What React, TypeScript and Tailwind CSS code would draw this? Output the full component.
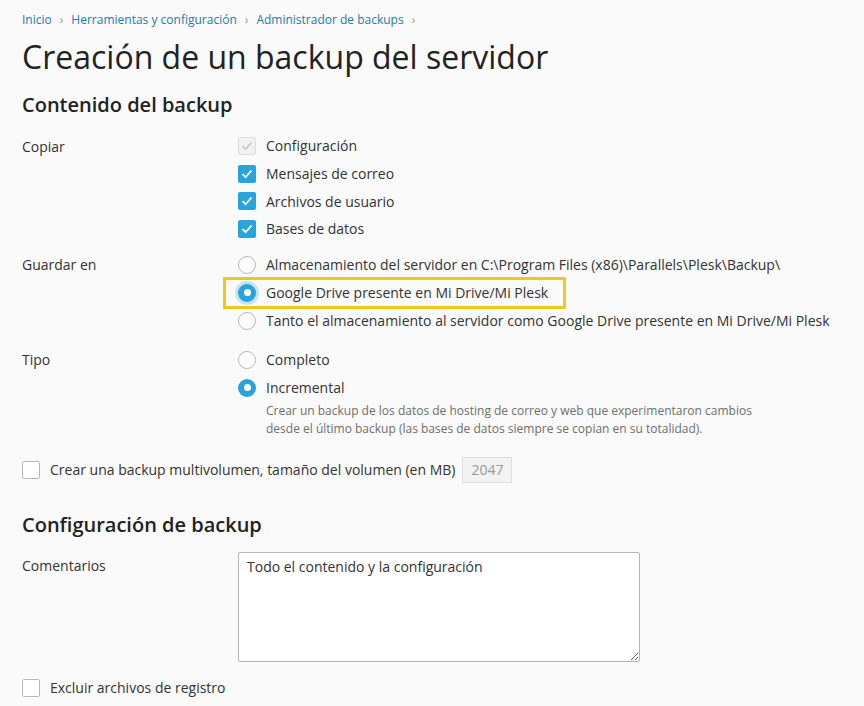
import React from "react";

const Check = ({ disabled }: { disabled?: boolean }) =>
  disabled ? (
    <span className="w-[18px] h-[18px] rounded-[2px] border border-[#dcdcdc] bg-[#f1f1f1] flex items-center justify-center shrink-0">
      <svg width="12" height="10" viewBox="0 0 12 10"><path d="M1.5 5.2 L4.6 8.2 L10.5 1.5" fill="none" stroke="#c4c4c4" strokeWidth="1.6" /></svg>
    </span>
  ) : (
    <span className="w-[18px] h-[18px] rounded-[2px] bg-[#28a3dc] flex items-center justify-center shrink-0">
      <svg width="12" height="10" viewBox="0 0 12 10"><path d="M1.5 5.2 L4.6 8.2 L10.5 1.5" fill="none" stroke="#ffffff" strokeWidth="1.8" /></svg>
    </span>
  );

const EmptyBox = () => (
  <span className="w-[18px] h-[18px] rounded-[2px] border border-[#b8b8b8] bg-white shrink-0" />
);

const Radio = ({ on, glow }: { on?: boolean; glow?: boolean }) =>
  on ? (
    <span className={"w-[18px] h-[18px] rounded-full bg-[#28a3dc] flex items-center justify-center shrink-0 " + (glow ? "shadow-[0_0_0_3px_rgba(40,163,220,0.25)]" : "")}>
      <span className="w-[7px] h-[7px] rounded-full bg-white" />
    </span>
  ) : (
    <span className="w-[18px] h-[18px] rounded-full border border-[#b8b8b8] bg-white shrink-0" />
  );

const Opt = ({ icon, text, tight }: { icon: React.ReactNode; text: string; tight?: boolean }) => (
  <div className={(tight ? "h-[27.7px]" : "h-[28px]") + " flex items-center gap-[10px]"}>
    {icon}
    <span className="text-[14px] text-[#333]">{text}</span>
  </div>
);

export default function App() {
  return (
    <div className="min-h-[706px] bg-[#fafafa] px-[22px] text-[#333]" style={{ fontFamily: '"Open Sans", sans-serif' }}>
      <div className="pt-[11px] flex items-center text-[12px] leading-[18px]">
        <span className="text-[#1e7bb0]">Inicio</span>
        <span className="text-[#999] mx-[8px]">›</span>
        <span className="text-[#1e7bb0]">Herramientas y configuración</span>
        <span className="text-[#999] mx-[8px]">›</span>
        <span className="text-[#1e7bb0]">Administrador de backups</span>
        <span className="text-[#999] mx-[8px]">›</span>
      </div>
      <h1 className="text-[32px] leading-[44px] text-[#222] mt-[6px]">Creación de un backup del servidor</h1>
      <h2 className="text-[20px] leading-[28px] font-semibold text-[#222] mt-[12px]">Contenido del backup</h2>

      <div className="grid grid-cols-[216px_1fr] mt-[13px]">
        <div className="text-[14px] h-[28px] flex items-center">Copiar</div>
        <div>
          <Opt tight icon={<Check disabled />} text="Configuración" />
          <Opt tight icon={<Check />} text="Mensajes de correo" />
          <Opt tight icon={<Check />} text="Archivos de usuario" />
          <Opt tight icon={<Check />} text="Bases de datos" />
        </div>

        <div className="text-[14px] h-[28px] flex items-center mt-[8px]">Guardar en</div>
        <div className="mt-[8px]">
          <Opt icon={<Radio />} text="Almacenamiento del servidor en C:\Program Files (x86)\Parallels\Plesk\Backup\" />
          <div className="relative">
            <div className="absolute left-[-15px] top-[-2px] w-[343px] h-[32px] border-[3px] border-[#f5c518]" />
            <Opt icon={<Radio on glow />} text="Google Drive presente en Mi Drive/Mi Plesk" />
          </div>
          <Opt icon={<Radio />} text="Tanto el almacenamiento al servidor como Google Drive presente en Mi Drive/Mi Plesk" />
        </div>

        <div className="text-[14px] h-[28px] flex items-center mt-[11px]">Tipo</div>
        <div className="mt-[11px]">
          <Opt icon={<Radio />} text="Completo" />
          <Opt icon={<Radio on />} text="Incremental" />
          <p className="ml-[28px] text-[12px] leading-[18px] text-[#6e6e6e] w-[500px] mt-0">
            Crear un backup de los datos de hosting de correo y web que experimentaron cambios desde el último backup (las bases de datos siempre se copian en su totalidad).
          </p>
        </div>
      </div>

      <div className="flex items-center gap-[10px] mt-[19px] h-[26px]">
        <EmptyBox />
        <span className="text-[14px]">Crear una backup multivolumen, tamaño del volumen (en MB)</span>
        <span className="ml-[-3px] w-[50px] h-[26px] border border-[#dedede] bg-[#f2f2f2] text-[14px] text-[#999] flex items-center justify-center">2047</span>
      </div>

      <h2 className="text-[20px] leading-[28px] font-semibold text-[#222] mt-[28px]">Configuración de backup</h2>

      <div className="grid grid-cols-[216px_1fr] mt-[13px]">
        <div className="text-[14px] leading-[20px] pt-[4px]">Comentarios</div>
        <textarea
          className="w-[402px] h-[110px] border border-[#b5b5b5] rounded-[2px] bg-white px-[8px] py-[4px] text-[14px] leading-[20px] text-[#333] outline-none"
          defaultValue="Todo el contenido y la configuración"
        />
      </div>

      <div className="flex items-center gap-[10px] mt-[12px] h-[28px]">
        <EmptyBox />
        <span className="text-[14px]">Excluir archivos de registro</span>
      </div>
    </div>
  );
}
